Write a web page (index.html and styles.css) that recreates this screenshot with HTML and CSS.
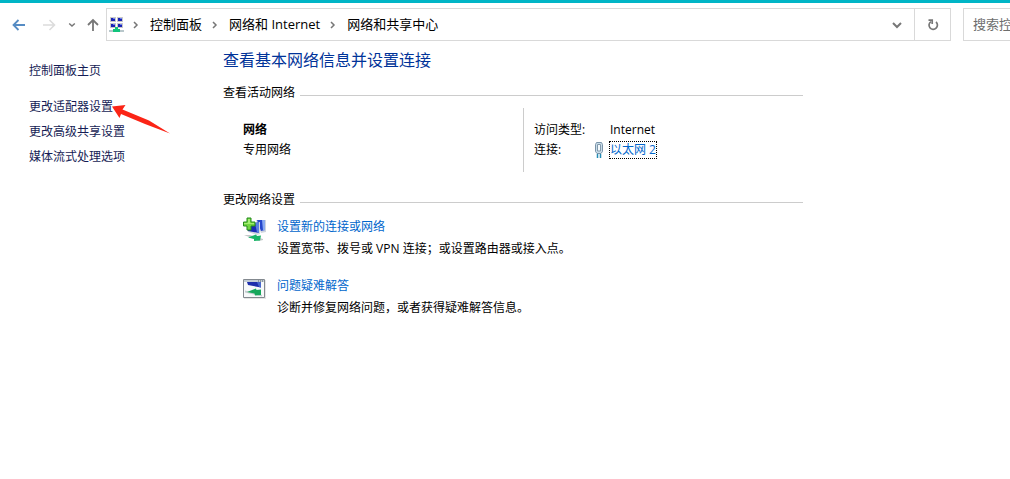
FILE: index.html
```html
<!DOCTYPE html>
<html lang="zh-CN">
<head>
<meta charset="utf-8">
<meta name="viewport" content="width=device-width, initial-scale=1">
<title>网络和共享中心</title>
<link rel="stylesheet" href="styles.css">
</head>
<body>
<header class="toolbar">
  <nav class="history" aria-label="导航">
    <button class="tool" type="button" aria-label="后退"><svg width="14" height="14" viewBox="0 0 14 14" fill="none" stroke="#568cc4" stroke-width="1.800"><path d="M13 7H2M6.500 2L1.500 7l5 5"/></svg></button>
    <button class="tool" type="button" aria-label="前进"><svg width="14" height="14" viewBox="0 0 14 14" fill="none" stroke="#dcdcdc" stroke-width="1.600"><path d="M1 7h11M7.500 2l5 5-5 5"/></svg></button>
    <button class="tool tool-small" type="button" aria-label="最近位置"><svg width="8" height="14" viewBox="0 0 8 14" fill="none" stroke="#777" stroke-width="1.500"><path d="M1.200 5.500L4 8l2.800-2.500"/></svg></button>
    <button class="tool" type="button" aria-label="上移"><svg width="14" height="14" viewBox="0 0 14 14" fill="none" stroke="#777" stroke-width="1.800"><path d="M7 13V2M2 7l5-5 5 5"/></svg></button>
  </nav>
  <div class="address">
    <svg class="address-icon" width="16" height="18" viewBox="0 0 16 18">
      <path d="M1 1h6v5H1zM8 1h6v5H8zM1 7h6v5H1zM8 7h6v5H8z" fill="#c9c9c9"/>
      <path d="M2 2h4v3H2zM9 2h4v3H9zM2 8h4v3H2zM9 8h4v3H9z" fill="#1a24b5"/>
      <path d="M4 2h2v1H4zM11 2h2v1h-2zM4 8h2v1H4zM11 8h2v1h-2z" fill="#6f83ef"/>
      <path d="M0 14h15v2H0z" fill="#b8c7cb"/><path d="M6 11h3v2h2v3H4v-3h2z" fill="#11c47c"/>
    </svg>
    <svg class="chevron" width="6" height="8" viewBox="0 0 6 8"><path d="M1 1l3 3-3 3"/></svg>
    <a class="crumb" href="#">控制面板</a>
    <svg class="chevron" width="6" height="8" viewBox="0 0 6 8"><path d="M1 1l3 3-3 3"/></svg>
    <a class="crumb" href="#">网络和 Internet</a>
    <svg class="chevron" width="6" height="8" viewBox="0 0 6 8"><path d="M1 1l3 3-3 3"/></svg>
    <a class="crumb" href="#">网络和共享中心</a>
    <button class="tool expand" type="button" aria-label="以前的位置"><svg width="10" height="8" viewBox="0 0 10 8" fill="none" stroke="#777" stroke-width="2"><path d="M1 2l4 4 4-4"/></svg></button>
    <button class="tool refresh" type="button" aria-label="刷新"><svg width="12" height="14" viewBox="0 0 12 14" fill="none" stroke="#777" stroke-width="1.700"><path d="M9 4A4.200 4.200 0 1 1 4 3.600"/><path d="M1.500 2.200H5.200V6"/></svg></button>
  </div>
  <input class="search" type="text" placeholder="搜索控制面板" aria-label="搜索控制面板">
</header>

<div class="page">
  <nav class="sidebar">
    <a class="side-link side-home" href="#">控制面板主页</a>
    <span class="marked"><a class="side-link" href="#">更改适配器设置</a><svg class="pointer" width="60" height="34" viewBox="0 0 60 34"><path d="M-1 4.500L12.500 3 9.500 7.500 36 18.500 57 31.500 32 22 8 12 6.500 16z" fill="#fb2416"/></svg></span>
    <a class="side-link" href="#">更改高级共享设置</a>
    <a class="side-link" href="#">媒体流式处理选项</a>
  </nav>

  <main class="content">
    <h1 class="title">查看基本网络信息并设置连接</h1>

    <section>
      <h2 class="section-title">查看活动网络</h2>
      <div class="network">
        <div class="network-name"><strong>网络</strong><span>专用网络</span></div>
        <dl class="details">
          <dt>访问类型:</dt><dd>Internet</dd>
          <dt>连接:</dt>
          <dd><svg class="plug" width="10" height="16" viewBox="0 0 10 16"><path d="M2.500.500h5l1 2v7L7 11.500H3L1.500 9.500v-7z" fill="#c9dce9" stroke="#7993a8"/><path d="M3.500 9V2.500h3V9z" fill="#f4fafd" stroke="#8199ab"/><path d="M3.500 12v4M6.500 12v4" stroke="#238bb5" stroke-width="1.500"/></svg><a class="link focused" href="#">以太网 2</a></dd>
        </dl>
      </div>
    </section>

    <section>
      <h2 class="section-title">更改网络设置</h2>
      <div class="task">
        <svg width="24" height="26" viewBox="0 0 24 26">
          <path d="M13 3h10v12l-5 1z" fill="#d0d5de"/><path d="M14 3h8v10l-4 1z" fill="#2646cc"/><path d="M19 3h3v10l-2 .500z" fill="#8aaaf2"/>
          <path d="M3 8l14-3v12l-3 1-9-3z" fill="#d5d9df"/><path d="M4 8l12-3v11l-11-2z" fill="#1b2cb5"/><path d="M12 6l4-1v11l-2-.500z" fill="#5a80e0"/>
          <path d="M1 18h6l13 4v1l-4 1z" fill="#c3c8c9"/><path d="M5 20.500l8-3 1 1.500 4-.500-1 5-6 .500v-2z" fill="#18b567"/>
          <path d="M4 1h4v4h4v4H8v4H4V9H.500V5H4z" fill="#72d541" stroke="#248b1c"/><path d="M5 2h2v4h4v1H1V6h4z" fill="#a4ee72"/>
        </svg>
        <div class="task-text"><a class="link" href="#">设置新的连接或网络</a><p>设置宽带、拨号或 VPN 连接；或设置路由器或接入点。</p></div>
      </div>
      <div class="task">
        <svg width="24" height="26" viewBox="0 0 24 26">
          <path d="M1 4h22v19H1z" fill="#e5e5e5"/><path d="M.500 3.500h21v18H.500z" fill="#f7f9fa" stroke="#83898f"/><path d="M1 4h20v2H1z" fill="#c2ccd5"/><path d="M15 5h1M17 5h1M19 5h1" stroke="#52606d"/>
          <path d="M4 6h14v5.500L5 9z" fill="#1d2eac"/><path d="M14 6h4v5.500l-2-.500z" fill="#4867cc"/><path d="M2 14.500l17 4.500v1.500L2 16.500z" fill="#c5cccf"/><path d="M4 16l9-3.500.500 1.500 4.500-.500V19l-6 .500-.500-2z" fill="#16a75b"/>
        </svg>
        <div class="task-text"><a class="link" href="#">问题疑难解答</a><p>诊断并修复网络问题，或者获得疑难解答信息。</p></div>
      </div>
    </section>
  </main>
</div>
</body>
</html>
```
FILE: styles.css
```css
* { box-sizing: border-box; }
body {
  margin: 0;
  border-top: 3px solid #00b5c6;
  background: #fff;
  color: #000;
  font: 12px/20px "Open Sans", "Noto Sans CJK SC", sans-serif;
  overflow-x: hidden;
}
a { color: inherit; text-decoration: none; }
h1, h2, p, dl, dd { margin: 0; font-weight: 400; }
svg { display: block; flex: none; }

.toolbar { display: flex; padding-top: 5px; }
.history { display: flex; align-items: center; gap: 12px; padding: 0 6px 0 12px; }
.tool { display: flex; align-items: center; justify-content: center; padding: 0; border: 0; background: none; }
.history .tool { width: 14px; }
.history .tool:nth-child(2) { margin-left: 4px; }
.history .tool-small { width: 8px; }
.history .tool:last-child { margin-left: -2px; }
.address { display: flex; align-items: center; flex: 1; min-width: 0; height: 33px; border: 1px solid #d9d9d9; font-size: 13px; }
.address-icon { margin: 0 8px 0 2px; }
.chevron { margin-right: 11px; fill: none; stroke: #777; stroke-width: 1.5px; }
.crumb { margin-right: 10px; padding-bottom: 2px; white-space: nowrap; }
.expand { width: 34px; height: 100%; margin-left: auto; }
.refresh { width: 36px; height: 100%; border-left: 1px solid #d9d9d9; }
.search { width: 47px; margin-left: 12px; padding: 0 0 2px 9px; border: 1px solid #d9d9d9; border-right: 0; border-radius: 0; background: #fff; font: inherit; font-size: 13px; }
.search::placeholder { color: #6d6d6d; opacity: 1; }

.page { display: flex; }
.sidebar { display: flex; flex-direction: column; align-items: flex-start; flex: none; width: 223px; padding: 17px 0 0 29px; }
.side-link { color: #151c55; line-height: 25px; }
.side-home { margin-bottom: 11px; }
.marked { position: relative; }
.pointer { position: absolute; top: 8px; left: 100%; overflow: visible; }

.content { flex: 1; max-width: 580px; padding-top: 7px; }
.title { margin-bottom: 11px; color: #003399; font-size: 16px; line-height: 24px; }
.section-title { display: flex; align-items: center; gap: 5px; font-size: 12px; }
.section-title::after { content: ""; flex: 1; height: 1px; margin-top: 4px; background: #ccc; }
.network { display: flex; margin: 5px 0 18px; padding-left: 20px; }
.network-name { display: flex; flex-direction: column; width: 280px; padding-top: 12px; }
.details { display: grid; grid-template-columns: 60px 1fr; align-content: start; flex: 1; min-height: 64px; padding: 12px 0 0 10px; border-left: 1px solid #ccc; }
.details dd { display: flex; align-items: center; padding-left: 16px; }
.details .plug { margin: 0 6px 0 -16px; }
.link { color: #0066cc; }
.focused { line-height: 16px; outline: 1px dotted #000; }
.task { display: flex; gap: 10px; margin: 7px 0 17px; padding-left: 20px; }
.task-text { display: flex; flex-direction: column; gap: 2px; }
```
